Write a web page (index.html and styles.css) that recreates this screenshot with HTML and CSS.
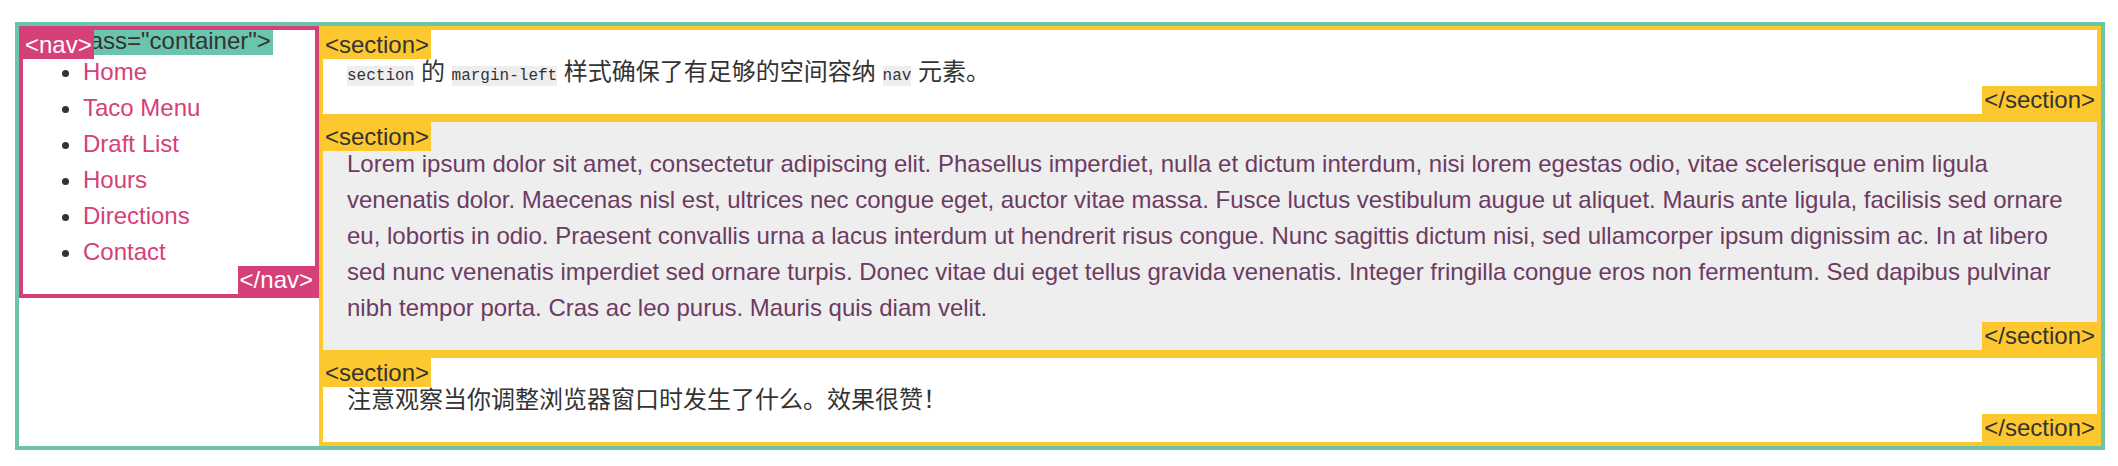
FILE: index.html
```html
<!DOCTYPE html>
<html lang="zh-CN">
<head>
<meta charset="utf-8">
<title>position 示例</title>
<link rel="stylesheet" href="styles.css">
</head>
<body>
<div class="container">
  <span class="tag tag-open tag-green">&lt;div class="container"&gt;</span>
  <nav class="nav">
    <span class="tag tag-open tag-pink">&lt;nav&gt;</span>
    <ul class="nav-list">
      <li><a href="#">Home</a></li>
      <li><a href="#">Taco Menu</a></li>
      <li><a href="#">Draft List</a></li>
      <li><a href="#">Hours</a></li>
      <li><a href="#">Directions</a></li>
      <li><a href="#">Contact</a></li>
    </ul>
    <span class="tag tag-close tag-pink">&lt;/nav&gt;</span>
  </nav>
  <div class="sections">
    <section class="section">
      <span class="tag tag-open tag-yellow">&lt;section&gt;</span>
      <p class="text"><code class="code">section</code> 的 <code class="code">margin-left</code> 样式确保了有足够的空间容纳 <code class="code">nav</code> 元素。</p>
      <span class="tag tag-close tag-yellow">&lt;/section&gt;</span>
    </section>
    <section class="section section-alt">
      <span class="tag tag-open tag-yellow">&lt;section&gt;</span>
      <p class="text">Lorem ipsum dolor sit amet, consectetur adipiscing elit. Phasellus imperdiet, nulla et dictum interdum, nisi lorem egestas odio, vitae scelerisque enim ligula venenatis dolor. Maecenas nisl est, ultrices nec congue eget, auctor vitae massa. Fusce luctus vestibulum augue ut aliquet. Mauris ante ligula, facilisis sed ornare eu, lobortis in odio. Praesent convallis urna a lacus interdum ut hendrerit risus congue. Nunc sagittis dictum nisi, sed ullamcorper ipsum dignissim ac. In at libero sed nunc venenatis imperdiet sed ornare turpis. Donec vitae dui eget tellus gravida venenatis. Integer fringilla congue eros non fermentum. Sed dapibus pulvinar nibh tempor porta. Cras ac leo purus. Mauris quis diam velit.</p>
      <span class="tag tag-close tag-yellow">&lt;/section&gt;</span>
    </section>
    <section class="section">
      <span class="tag tag-open tag-yellow">&lt;section&gt;</span>
      <p class="text">注意观察当你调整浏览器窗口时发生了什么。效果很赞！</p>
      <span class="tag tag-close tag-yellow">&lt;/section&gt;</span>
    </section>
  </div>
</div>
</body>
</html>
```

FILE: styles.css
```css
* {
  box-sizing: border-box;
}

html,
body {
  background: #fff;
}

body {
  margin: 22px 13px 0 15px;
  font-family: "Liberation Sans", Arial, "Noto Sans CJK SC", sans-serif;
  font-size: 24px;
  line-height: 36px;
  color: #333;
}

.container {
  position: relative;
  display: flex;
  align-items: flex-start;
  border: 4px solid #6ac5ac;
  background: #fff;
}

.tag {
  position: absolute;
  font-size: 24px;
  line-height: 29px;
  padding: 0 2px;
  color: #333;
  white-space: nowrap;
}

.tag-open {
  top: 0;
  left: 0;
}

.tag-close {
  bottom: 0;
  right: 0;
  line-height: 28px;
}

.tag-green {
  background: #6ac5ac;
}

.tag-pink {
  background: #d64078;
  color: #fff;
}

.tag-yellow {
  background: #fdc72f;
}

.nav {
  position: relative;
  flex: 0 0 300px;
  width: 300px;
  border: 4px solid #d64078;
  padding: 24px;
}

.nav-list {
  margin: 0;
  padding-left: 36px;
}

.nav-list a {
  color: #d64078;
  text-decoration: none;
}

.sections {
  flex: 1 1 auto;
  min-width: 0;
}

.section {
  position: relative;
  border: 4px solid #fdc72f;
  padding: 24px;
  background: #fff;
}

.section-alt {
  background: #eee;
  color: #6c3b62;
}

.text {
  margin: 0;
}

.code {
  font-family: "Liberation Mono", "DejaVu Sans Mono", monospace;
  font-size: 16px;
  line-height: 19px;
  padding: 1px 0;
  background: #eee;
}
```
